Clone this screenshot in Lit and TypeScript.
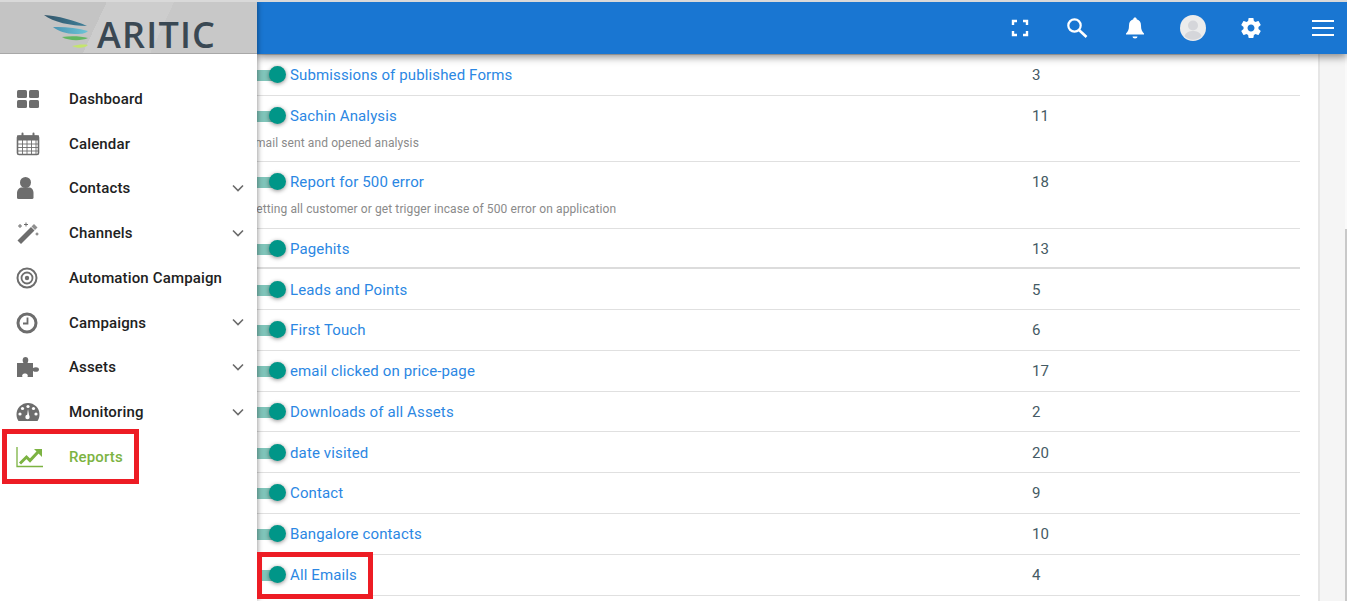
import { LitElement, html, css, svg } from "lit";
import { customElement } from "lit/decorators.js";

const G = "#6d6d6d";
const icons: Record<string, unknown> = {
  dash: svg`<svg width="24" height="20" viewBox="0 0 24 20" fill="${G}"><rect x="1" y="1" width="10" height="8" rx="1.5"/><rect x="13" y="1" width="10" height="8" rx="1.5"/><rect x="1" y="11" width="10" height="8" rx="1.5"/><rect x="13" y="11" width="10" height="8" rx="1.5"/></svg>`,
  cal: svg`<svg width="24" height="24" viewBox="0 0 24 24" fill="none" stroke="${G}"><rect x="1.5" y="4" width="21" height="18.5" rx="1.5" stroke-width="1.6"/><rect x="1.5" y="4" width="21" height="4" fill="${G}" stroke-width="1"/><path d="M2 12h20M2 15.5h20M2 19h20M6.5 8v14M11 8v14M15.5 8v14M20 8v14" stroke-width=".9"/><path d="M6.5 1.5v4M17.5 1.5v4" stroke-width="2" stroke-linecap="round"/></svg>`,
  user: svg`<svg width="24" height="24" viewBox="0 0 24 24" fill="${G}"><circle cx="9.500" cy="6.500" r="5.500"/><path d="M1 17c0-3.500 2.500-5.500 5-5.500h7c2.500 0 4.500 2 4.500 5.500v4.500a1.500 1.500 0 0 1-1.500 1.500H2.500A1.500 1.500 0 0 1 1 21.500z"/></svg>`,
  wand: svg`<svg width="24" height="24" viewBox="0 0 24 24"><path d="M1.500 19.500 15 6l3.500 3.500L5 23z" fill="${G}"/><path d="M15.500 5.500l2.500-2.500 3.500 3.500L19 9z" fill="#8f8f8f"/><path d="M4 3v4M2 5h4M10 1.500v4M8 3.500h4M21 11.500v3M19.500 13h3" stroke="${G}" stroke-width="1"/></svg>`,
  target: svg`<svg width="22" height="22" viewBox="0 0 22 22" fill="none" stroke="${G}"><circle cx="11" cy="11" r="9.500" stroke-width="2"/><circle cx="11" cy="11" r="5.500" stroke-width="1.800"/><circle cx="11" cy="11" r="2.200" fill="${G}" stroke="none"/></svg>`,
  clock: svg`<svg width="22" height="22" viewBox="0 0 22 22" fill="none" stroke="${G}"><circle cx="11" cy="11" r="9" stroke-width="3"/><path d="M11.500 5.500v6H7" stroke-width="1.800"/></svg>`,
  puzzle: svg`<svg width="24" height="22" viewBox="0 0 24 22" fill="${G}"><path d="M1 7h6.500C6 4.500 6.500 1 9.500 1s3.500 3.500 2 6H17v5c2.500-1.500 6-1 6 1.500S19.500 16.500 17 15v6h-5.500c1-2-.5-3.500-2.500-3.500S5.500 19 6.500 21H1z"/></svg>`,
  gauge: svg`<svg width="24" height="20" viewBox="0 0 24 20"><path d="M12 1A11.500 11.500 0 0 0 .5 12.500c0 2.500.7 4.800 2 6.500h19c1.300-1.700 2-4 2-6.500A11.500 11.500 0 0 0 12 1z" fill="${G}"/><g fill="#fff"><circle cx="12" cy="4.500" r="1.600"/><circle cx="6.500" cy="6.500" r="1.600"/><circle cx="17.500" cy="6.500" r="1.600"/><circle cx="4" cy="12" r="1.600"/><circle cx="20" cy="12" r="1.600"/><circle cx="11.500" cy="15" r="2.200"/><path d="M11 14 12 7l1.200 7z"/></g></svg>`,
  chart: svg`<svg width="28" height="22" viewBox="0 0 28 22" fill="none" stroke="#7cb342"><path d="M1 1v19.500h26" stroke-width="1.300"/><path d="M4 17.500 10.500 11l3.500 3.500L22 6" stroke-width="3"/><path d="M18 3h8v8z" fill="#7cb342" stroke="none"/></svg>`,
};

const chevron = svg`<svg width="12" height="8" viewBox="0 0 12 8" fill="none" stroke="#6b6b6b" stroke-width="1.600"><path d="M1 1.500 6 6.500l5-5"/></svg>`;

const nav = [
  { icon: "dash", label: "Dashboard" },
  { icon: "cal", label: "Calendar" },
  { icon: "user", label: "Contacts", more: true },
  { icon: "wand", label: "Channels", more: true },
  { icon: "target", label: "Automation Campaign" },
  { icon: "clock", label: "Campaigns", more: true },
  { icon: "puzzle", label: "Assets", more: true },
  { icon: "gauge", label: "Monitoring", more: true },
  { icon: "chart", label: "Reports", active: true },
];

const rows = [
  { name: "Submissions of published Forms", n: 3, h: 41 },
  { name: "Sachin Analysis", n: 11, desc: "Email sent and opened analysis", h: 66 },
  { name: "Report for 500 error", n: 18, desc: "Getting all customer or get trigger incase of 500 error on application", h: 67 },
  { name: "Pagehits", n: 13, h: 40 },
  { name: "Leads and Points", n: 5, h: 41, nudge: true },
  { name: "First Touch", n: 6, h: 41 },
  { name: "email clicked on price-page", n: 17, h: 41 },
  { name: "Downloads of all Assets", n: 2, h: 40 },
  { name: "date visited", n: 20, h: 41, nudge: true },
  { name: "Contact", n: 9, h: 41 },
  { name: "Bangalore contacts", n: 10, h: 41 },
  { name: "All Emails", n: 4, h: 41 },
];

@customElement("app-root")
export class AppRoot extends LitElement {
  static styles = css`
    :host {
      display: block;
      position: relative;
      width: 1347px;
      height: 601px;
      overflow: hidden;
      background: #fff;
      font-family: Roboto, "Liberation Sans", sans-serif;
      border-top: 2px solid #d9d9d9;
      box-sizing: border-box;
    }
    .shell { display: flex; height: 100%; }
    .side {
      width: 257px;
      flex: none;
      background: #fff;
      position: relative;
      z-index: 3;
      box-shadow: 1px 0 5px rgba(0,0,0,.38);
      display: flex;
      flex-direction: column;
    }
    .logo {
      height: 51px;
      flex: none;
      border-bottom: 1px solid #a8a8a8;
      background: linear-gradient(115deg, #c4c4c4 0 38%, #cdcdcd 38% 62%, #c8c8c8 62%);
      display: flex;
      align-items: center;
      padding-left: 44px;
      gap: 7px;
      box-sizing: content-box;
    }
    .word {
      font-family: "Open Sans", "Noto Sans", sans-serif;
      font-size: 36px;
      font-weight: 600;
      color: #3a4853;
      letter-spacing: 1.2px;
      line-height: 1;
      margin-top: 15px;
    }
    .nav { padding-top: 22.5px; display: flex; flex-direction: column; }
    .item {
      height: 44.75px;
      display: flex;
      align-items: center;
      padding-left: 16px;
      font-size: 15px;
      letter-spacing: .15px;
      font-weight: 500;
      color: #212121;
      position: relative;
    }
    .ic { width: 53px; flex: none; display: flex; align-items: center; }
    .item.active { color: #7cb342; }
    .chev { position: absolute; left: 232px; top: 18px; display: flex; }
    .main { flex: 1; min-width: 0; display: flex; flex-direction: column; }
    .bar {
      height: 52px;
      flex: none;
      background: #1976d2;
      position: relative;
      z-index: 2;
      box-shadow: 0 3px 8px rgba(0,0,0,.45);
      display: flex;
      align-items: center;
      justify-content: flex-end;
    }
    .tool { display: flex; justify-content: center; align-items: center; flex: none; }
    .body { flex: 1; display: flex; min-height: 0; }
    .list { width: 1043px; flex: none; border-top: 1px solid #d5d5d5; }
    .row {
      box-sizing: border-box;
      border-bottom: 1px solid #e0e0e0;
      display: grid;
      grid-template-columns: 775px 1fr;
      grid-template-rows: 40px auto;
      align-content: start;
      font-size: 15px;
      letter-spacing: .13px;
      color: #455a64;
      position: relative;
    }
    .row.thick { border-bottom: 2px solid #dcdcdc; }
    .row.nudge { padding-top: 1px; }
    .name {
      display: flex;
      align-items: center;
      height: 40px;
      color: #2b87e3;
      white-space: nowrap;
    }
    .toggle {
      width: 33px;
      flex: none;
      height: 20px;
      position: relative;
    }
    .track {
      position: absolute;
      left: 0;
      top: 5px;
      width: 20px;
      height: 11px;
      background: #80c5ba;
    }
    .knob {
      position: absolute;
      left: 12px;
      top: 1px;
      width: 17px;
      height: 17px;
      border-radius: 50%;
      background: #009688;
      box-shadow: 0 1px 4px rgba(0,0,0,.45);
    }
    .count { height: 40px; display: flex; align-items: center; }
    .desc {
      grid-column: 1 / -1;
      font-size: 12px;
      letter-spacing: .1px;
      color: #8a8a8a;
      margin-left: -9px;
      height: 18px;
      white-space: nowrap;
      line-height: 14px;
    }
    .rail { width: 18px; flex: none; background: #fff; }
    .gutter {
      flex: 1;
      background: #f5f5f5;
      border-left: 2px solid #e6e6e6;
      display: flex;
      justify-content: flex-end;
    }
    .scroll { width: 2px; background: #fafafa; padding-top: 175px; box-sizing: border-box; }
    .thumb { height: 100%; background: #c9c9c9; }
    .mark {
      position: absolute;
      border: 5px solid #ed1c24;
      box-sizing: border-box;
      z-index: 5;
      pointer-events: none;
    }
    .m1 { left: 2px; top: 427px; width: 137px; height: 55px; }
    .m2 { left: 257px; top: 550px; width: 116px; height: 47px; }
  `;

  render() {
    return html`
      <div class="shell">
        <aside class="side">
          <div class="logo">
            <svg width="46" height="51" viewBox="0 0 46 51">
              <defs>
                <linearGradient id="w1" x1="0" x2="1"><stop offset="0" stop-color="#33566a"/><stop offset="1" stop-color="#3f7f99"/></linearGradient>
                <linearGradient id="w2" x1="0" x2="1"><stop offset="0" stop-color="#4a94b3"/><stop offset="1" stop-color="#6cc4d6"/></linearGradient>
              </defs>
              <path d="M0 13c14 1 30 5 43 11-16 0-34-4-43-11z" fill="url(#w1)"/>
              <path d="M9 25c10-.5 24 .5 35 4-3 3-8 3-13 3-9 0-17-3-22-7z" fill="url(#w2)"/>
              <path d="M18 35c8-1 18-1 26 1-6 3-20 3-26-1z" fill="#62b761"/>
              <path d="M28 44c5-1 11-2 16-1-3 3-10 4-16 1z" fill="#c4e56c"/>
            </svg>
            <span class="word">ARITIC</span>
          </div>
          <nav class="nav">
            ${nav.map(
              (n) => html`<div class="item ${n.active ? "active" : ""}">
                <span class="ic">${icons[n.icon]}</span>${n.label}
                ${n.more ? html`<span class="chev">${chevron}</span>` : ""}
              </div>`
            )}
          </nav>
        </aside>
        <div class="main">
          <header class="bar">
            <span class="tool" style="width:18px;margin-right:37px">
              <svg width="18" height="18" viewBox="0 0 18 18" fill="none" stroke="#fff" stroke-width="2.400"><path d="M2 6V2h4M12 2h4v4M16 12v4h-4M6 16H2v-4"/></svg>
            </span>
            <span class="tool" style="width:22px;margin-right:37px">
              <svg width="22" height="22" viewBox="0 0 22 22" fill="none" stroke="#fff"><circle cx="8.500" cy="8.500" r="6.200" stroke-width="2.200"/><path d="M13 13l7.500 7" stroke-width="2.600"/></svg>
            </span>
            <span class="tool" style="width:20px;margin-right:35px">
              <svg width="20" height="24" viewBox="0 0 20 24" fill="#fff"><path d="M10 1.500c1 0 1.700.7 1.700 1.700 3 .8 4.300 3.200 4.300 6.300 0 4 1 6.200 3 8v1H1v-1c2-1.800 3-4 3-8 0-3.100 1.300-5.500 4.300-6.300 0-1 .7-1.700 1.700-1.700z"/><path d="M7.500 20.500h5a2.500 2 0 0 1-5 0z"/></svg>
            </span>
            <span class="tool" style="width:26px;margin-right:33px">
              <svg width="26" height="26" viewBox="0 0 26 26"><circle cx="13" cy="13" r="13" fill="#ececec"/><circle cx="13" cy="10.500" r="5" fill="#d5d6da"/><path d="M4.500 21c1.500-4 5-5 8.500-5s7 1 8.500 5a11.500 11.500 0 0 1-17 0z" fill="#d5d6da"/></svg>
            </span>
            <span class="tool" style="width:24px;margin-right:49px">
              <svg width="24" height="24" viewBox="0 0 24 24" fill="#fff"><path d="M19.430 12.980c.04-.32.070-.64.070-.98s-.03-.66-.07-.98l2.110-1.650c.19-.15.240-.42.120-.64l-2-3.460c-.12-.22-.39-.3-.61-.22l-2.490 1c-.52-.4-1.080-.73-1.690-.98l-.38-2.650C14.460 2.180 14.250 2 14 2h-4c-.25 0-.46.18-.49.42l-.38 2.650c-.61.25-1.170.59-1.690.98l-2.490-1c-.23-.09-.49 0-.61.22l-2 3.460c-.13.22-.07.49.12.64l2.110 1.650c-.04.32-.07.65-.07.98s.03.66.07.98l-2.110 1.650c-.19.15-.24.42-.12.64l2 3.460c.12.22.39.3.61.22l2.490-1c.52.4 1.080.73 1.690.98l.38 2.650c.03.24.24.42.49.42h4c.25 0 .46-.18.49-.42l.38-2.650c.61-.25 1.170-.59 1.690-.98l2.490 1c.23.09.49 0 .61-.22l2-3.460c.12-.22.07-.49-.12-.64l-2.110-1.650zM12 15.500c-1.930 0-3.500-1.570-3.500-3.500s1.570-3.500 3.500-3.500 3.500 1.570 3.500 3.500-1.570 3.500-3.500 3.500z"/></svg>
            </span>
            <span class="tool" style="width:22px;margin-right:13px">
              <svg width="22" height="16" viewBox="0 0 22 16" fill="#fff"><rect y="0" width="22" height="2"/><rect y="7" width="22" height="2"/><rect y="14" width="22" height="2"/></svg>
            </span>
          </header>
          <div class="body">
            <div class="list">
              ${rows.map(
                (r, i) => html`<div class="row ${i === 3 ? "thick" : ""} ${r.nudge ? "nudge" : ""}" style="height:${r.h}px">
                  <div class="name">
                    <span class="toggle"><span class="track"></span><span class="knob"></span></span>${r.name}
                  </div>
                  <div class="count">${r.n}</div>
                  ${r.desc ? html`<div class="desc">${r.desc}</div>` : ""}
                </div>`
              )}
            </div>
            <div class="rail"></div>
            <div class="gutter"><div class="scroll"><div class="thumb"></div></div></div>
          </div>
        </div>
      </div>
      <div class="mark m1"></div>
      <div class="mark m2"></div>
    `;
  }
}
